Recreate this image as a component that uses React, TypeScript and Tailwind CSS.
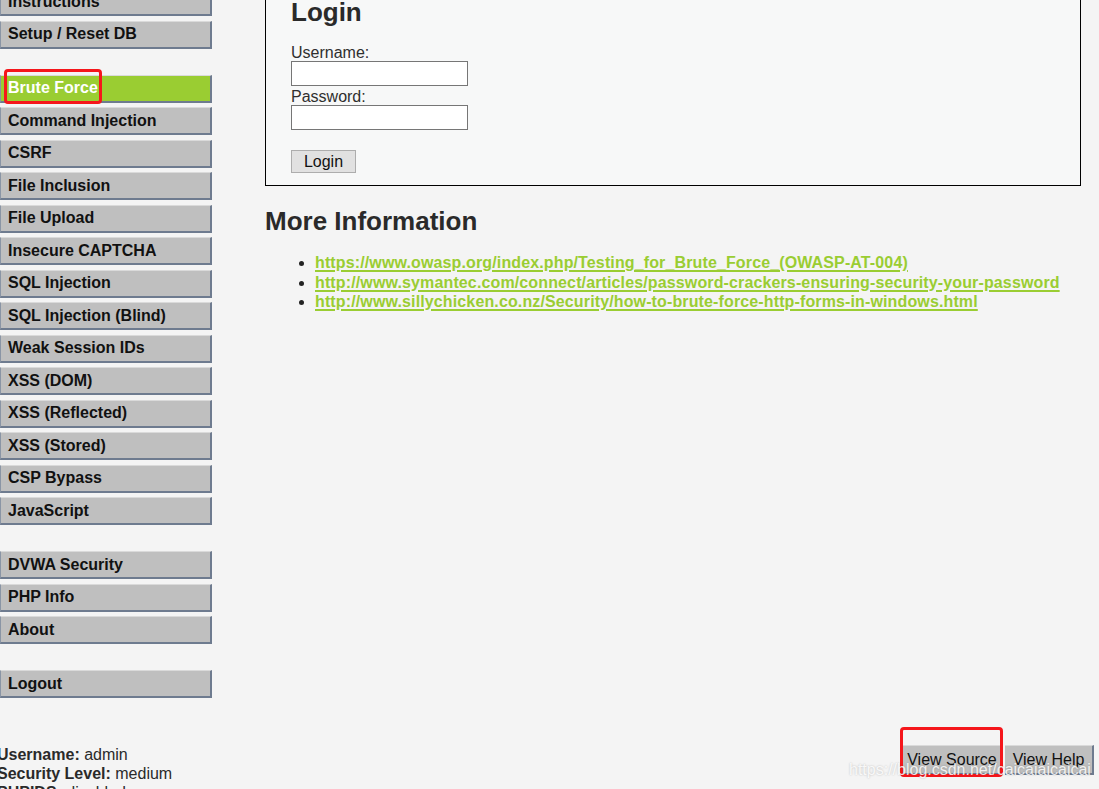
// DVWA — Brute Force page (scrolled view)

const FONT = { fontFamily: '"Liberation Sans", Arial, sans-serif' };

const groups: string[][] = [
  ['Instructions', 'Setup / Reset DB'],
  [
    'Brute Force',
    'Command Injection',
    'CSRF',
    'File Inclusion',
    'File Upload',
    'Insecure CAPTCHA',
    'SQL Injection',
    'SQL Injection (Blind)',
    'Weak Session IDs',
    'XSS (DOM)',
    'XSS (Reflected)',
    'XSS (Stored)',
    'CSP Bypass',
    'JavaScript',
  ],
  ['DVWA Security', 'PHP Info', 'About'],
  ['Logout'],
];

const links = [
  'https://www.owasp.org/index.php/Testing_for_Brute_Force_(OWASP-AT-004)',
  'http://www.symantec.com/connect/articles/password-crackers-ensuring-security-your-password',
  'http://www.sillychicken.co.nz/Security/how-to-brute-force-http-forms-in-windows.html',
];

function MenuItem({ label }: { label: string }) {
  const active = label === 'Brute Force';
  return (
    <div
      className={
        'flex h-[28px] items-center border-t border-l border-t-[#dadada] border-l-[#8a95a5] border-r-2 border-b-2 border-r-[#6e7b8f] border-b-[#6e7b8f] pl-[7px] text-[16px] font-bold leading-[18px] ' +
        (active ? 'bg-[#9acd32] text-white' : 'bg-[#bfbfbf] text-[#111]')
      }
    >
      {label}
    </div>
  );
}

function Sidebar() {
  return (
    <div className="flex w-[212px] shrink-0 flex-col -mt-[12px]">
      {groups.map((g, gi) => (
        <div key={gi} className={'flex flex-col gap-[4.5px] ' + (gi > 0 ? 'mt-[26px]' : '')}>
          {g.map((l) => (
            <MenuItem key={l} label={l} />
          ))}
        </div>
      ))}
      <div className="-ml-[3px] mt-[47px] text-[16px] leading-[19px] text-[#2a2a2a] whitespace-nowrap">
        <div>
          <b>Username:</b> admin
        </div>
        <div>
          <b>Security Level:</b> medium
        </div>
        <div>
          <b>PHPIDS:</b> disabled
        </div>
      </div>
    </div>
  );
}

function LoginBox() {
  return (
    <div className="w-[816px] -mt-[10px] border border-black bg-[#f7f8f8] pl-[25px] pt-[7px] pb-[12px]">
      <h1 className="text-[26px] font-bold leading-[29px] text-[#2a2a2a]">Login</h1>
      <div className="mt-[18px] text-[16px] leading-[16px] text-[#2f2f2f]">Username:</div>
      <input className="block h-[25px] w-[177px] border border-[#767676] bg-white" />
      <div className="mt-[3px] text-[16px] leading-[16px] text-[#2f2f2f]">Password:</div>
      <input type="password" className="block h-[25px] w-[177px] border border-[#767676] bg-white" />
      <button className="mt-[20px] flex h-[23px] w-[65px] items-center justify-center border border-[#adadad] bg-[#e1e1e1] text-[16px] leading-[18px] text-[#111]">
        Login
      </button>
    </div>
  );
}

export default function App() {
  return (
    <div className="relative h-[789px] w-[1099px] overflow-hidden bg-[#f4f4f4]" style={FONT}>
      <div className="flex h-full">
        <Sidebar />
        <div className="ml-[53px] flex flex-1 flex-col">
          <LoginBox />
          <h2 className="mt-[21px] text-[26px] font-bold leading-[28px] text-[#2a2a2a]">More Information</h2>
          <ul className="mt-[18px] list-disc pl-[50px] text-[16px] leading-[19.5px]">
            {links.map((l) => (
              <li key={l} className="text-[#222]">
                <a className="font-bold tracking-[0.13px] text-[#9acd32] underline decoration-[2px] underline-offset-[2px]">
                  {l}
                </a>
              </li>
            ))}
          </ul>
          <div className="mt-auto mb-[14px] mr-[5px] flex justify-end gap-[2px]">
            <button className="flex h-[30px] w-[100px] items-center justify-center border-t border-t-[#dadada] border-r-2 border-b-2 border-r-[#6e7b8f] border-b-[#6e7b8f] bg-[#bfbfbf] text-[16px] text-[#111]">
              View Source
            </button>
            <button className="flex h-[30px] w-[89px] items-center justify-center border-t border-t-[#dadada] border-r-2 border-b-2 border-r-[#6e7b8f] border-b-[#6e7b8f] bg-[#bfbfbf] text-[16px] text-[#111]">
              View Help
            </button>
          </div>
        </div>
      </div>

      {/* red annotation boxes */}
      <div className="pointer-events-none absolute left-[4px] top-[69px] h-[35px] w-[98px] rounded-[4px] border-[3px] border-[#f5161b]" />
      <div className="pointer-events-none absolute left-[900px] top-[727px] h-[50px] w-[103px] rounded-[4px] border-[3px] border-[#f5161b]" />

      {/* watermark */}
      <div className="pointer-events-none absolute left-[849px] top-[760px] text-[16px] leading-[19px] text-white/85 [text-shadow:0_0_2px_rgba(0,0,0,0.25)]">
        https://blog.csdn.net/caicaiaicaicai
      </div>
    </div>
  );
}
